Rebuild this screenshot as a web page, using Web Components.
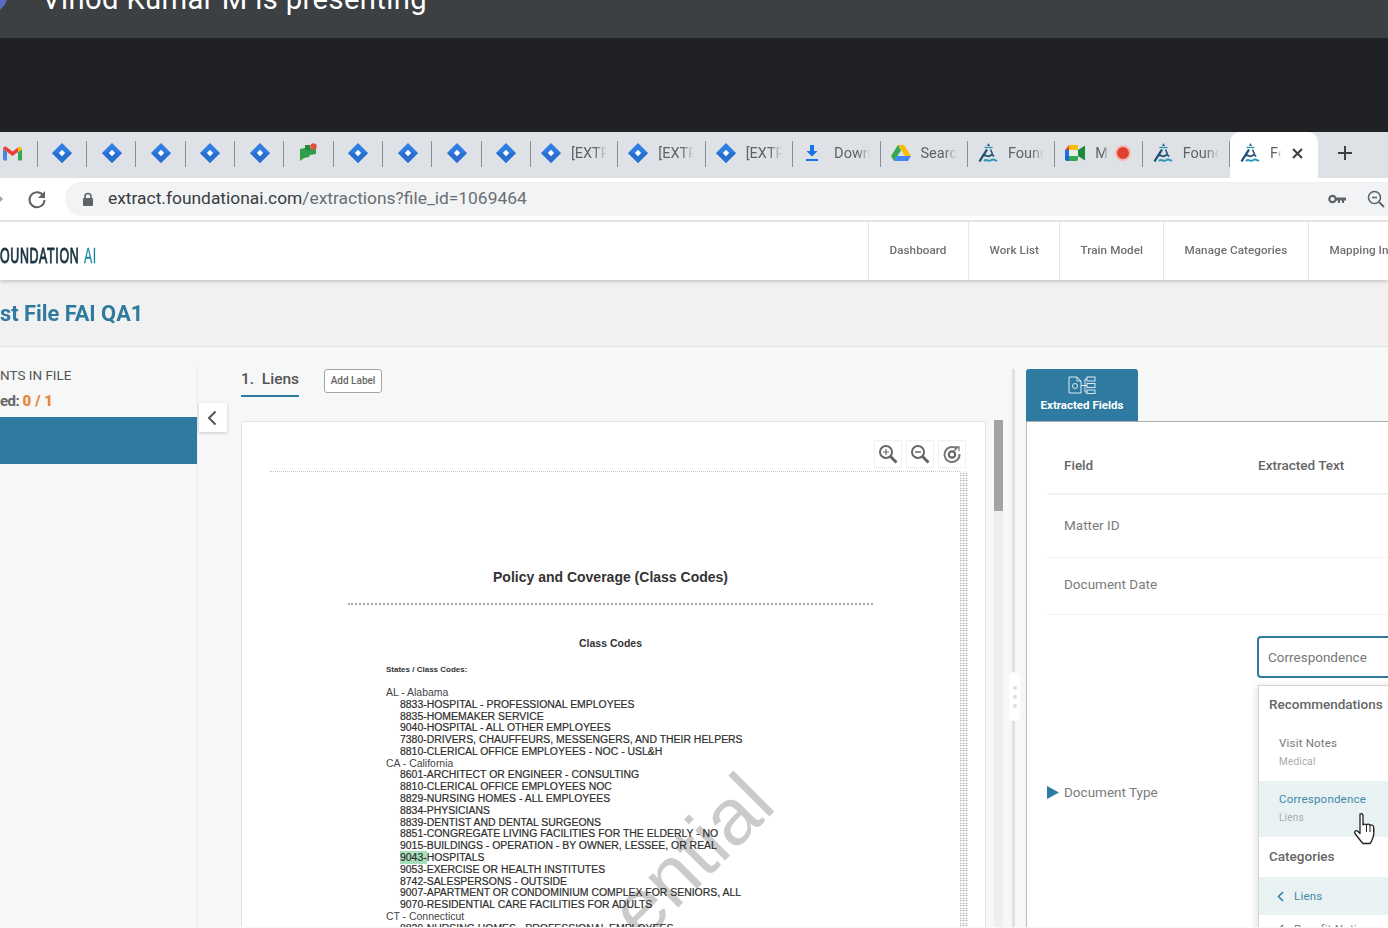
<!DOCTYPE html>
<html lang="en">
<head>
<meta charset="utf-8">
<title>Foundation AI extraction</title>
<style>
  html, body { margin: 0; height: 928px; overflow: hidden; background: #f6f7f7; }
  body { font-family: Roboto, "Liberation Sans", sans-serif; }
</style>
</head>
<body>
<share-view>
  <meet-bar>Vinod Kumar M is presenting</meet-bar>
  <tab-strip>
    <tab-item kind="gmail" narrow first></tab-item>
    <tab-item kind="jira" narrow></tab-item>
    <tab-item kind="jira" narrow></tab-item>
    <tab-item kind="jira" narrow></tab-item>
    <tab-item kind="jira" narrow></tab-item>
    <tab-item kind="jira" narrow></tab-item>
    <tab-item kind="chat" narrow></tab-item>
    <tab-item kind="jira" narrow></tab-item>
    <tab-item kind="jira" narrow></tab-item>
    <tab-item kind="jira" narrow></tab-item>
    <tab-item kind="jira" narrow></tab-item>
    <tab-item kind="jira">[EXTR</tab-item>
    <tab-item kind="jira">[EXTR</tab-item>
    <tab-item kind="jira">[EXTR</tab-item>
    <tab-item kind="download">Down</tab-item>
    <tab-item kind="drive">Searc</tab-item>
    <tab-item kind="found">Found</tab-item>
    <tab-item kind="meet" rec>M</tab-item>
    <tab-item kind="found">Found</tab-item>
    <tab-item kind="found" active>Fo</tab-item>
  </tab-strip>
  <addr-bar></addr-bar>
  <app-header>
    <nav-link w="100">Dashboard</nav-link>
    <nav-link w="91">Work List</nav-link>
    <nav-link w="104">Train Model</nav-link>
    <nav-link w="145">Manage Categories</nav-link>
    <nav-link w="80">Mapping In</nav-link>
  </app-header>
  <title-band>st File FAI QA1</title-band>
  <main-area>
    <docs-side></docs-side>
    <doc-viewer></doc-viewer>
    <extract-panel></extract-panel>
  </main-area>
</share-view>

<script>
const ICONS = {
  jira: `<svg width="20" height="20" viewBox="0 0 20 20"><path d="M10 0l10 10-10 10L0 10z" fill="#2f7de1"/><path d="M20 10L10 20 0 10l5-.5h10z" fill="#2a6fd0"/><path d="M10 6.800l3.200 3.200-3.200 3.200L6.800 10z" fill="#fff"/></svg>`,
  gmail: `<svg width="19" height="15" viewBox="0 0 19 15"><path d="M0 13.500V3l4 3v8.500H1z" fill="#4a86e8"/><path d="M15 14.500V6l4-3v10.500a1 1 0 0 1-1 1z" fill="#34a853"/><path d="M0 3c0-2 2-3 3.500-2L9.500 5.500 15 1.500 15 6 9.500 10 0 3z" fill="#ea4335"/><path d="M15 1.500C17 0 19 1 19 3l-4 3z" fill="#fbbc04"/></svg>`,
  chat: `<svg width="22" height="22" viewBox="0 0 22 22"><path d="M2 7l5-1V3h5v3l6 1v5l-6 1-1 2-5 1-4 3z" fill="#2f9e48"/><path d="M7 3h5v5H7z" fill="#1f8a3c"/><circle cx="15.500" cy="4.500" r="3.200" fill="#e2503e"/></svg>`,
  download: `<svg width="18" height="20" viewBox="0 0 18 20" style="margin-right:3px"><path d="M7 2h4v6h3.500L9 13.500 3.500 8H7z" fill="#1a73e8"/><path d="M3 16h12v2H3z" fill="#1a73e8"/></svg>`,
  drive: `<svg width="20" height="18" viewBox="0 0 20 18"><path d="M7 1h6l7 11h-6z" fill="#fbbc04"/><path d="M7 1l3 5.500L3 17 0 12z" fill="#34a853"/><path d="M6 12h14l-3 5H3z" fill="#4285f4"/></svg>`,
  found: `<svg width="20" height="20" viewBox="0 0 20 20"><path d="M10.500 0l1.600 3H8.900z" fill="#1b6f96"/><path d="M6.500 4.500h8" stroke="#2d8fb0" stroke-width="1.300"/><path d="M9 6.500C7 10 5 12 1.500 18.500" fill="none" stroke="#1d4f74" stroke-width="2.200"/><path d="M12.500 6.500l2 4.500" fill="none" stroke="#1d4f74" stroke-width="1.500"/><path d="M5 13c2.500-2.500 4 1.500 6.500 0s3-1.500 4.500.5" fill="none" stroke="#1d4f74" stroke-width="1.800"/><path d="M6 18c2.500-3 4 1 6.500-.5s3-1.500 6.500.5" fill="none" stroke="#2a9ab8" stroke-width="2"/></svg>`,
  meet: `<svg width="20" height="16" viewBox="0 0 20 16"><path d="M4 0h9v5H4z" fill="#fbbc04"/><path d="M4 0v5H0z" fill="#ea4335"/><path d="M0 5h4v6H0z" fill="#1a73e8"/><path d="M0 11h4v5H2a2 2 0 0 1-2-2z" fill="#1967d2"/><path d="M4 11h9v3a2 2 0 0 1-2 2H4z" fill="#34a853"/><path d="M13 5v6l7 4.500V.500z" fill="#1b8a3c"/><path d="M4 5h9v6H4z" fill="#e9efe6"/></svg>`
};

class ShareView extends HTMLElement {
  constructor() {
    super();
    this.attachShadow({ mode: 'open' }).innerHTML = `
      <style>:host{display:block;height:928px;overflow:hidden;filter:blur(.45px);}</style>
      <slot></slot>`;
  }
}

class MeetBar extends HTMLElement {
  constructor() {
    super();
    this.attachShadow({ mode: 'open' }).innerHTML = `
      <style>
        :host{display:block;height:38px;background:#3c4043;overflow:hidden;}
        .wrap{display:flex;align-items:flex-start;}
        .avatar{width:44px;height:44px;border-radius:50%;background:#5c6bc0;margin:-29px 34px 0 -36px;flex:none;}
        .name{font:400 29.200px/30px Roboto,sans-serif;color:#fff;margin-top:-16px;white-space:nowrap;letter-spacing:.4px;}
      </style>
      <div class="wrap"><div class="avatar"></div><div class="name"><slot></slot></div></div>`;
  }
}

class TabStrip extends HTMLElement {
  constructor() {
    super();
    this.attachShadow({ mode: 'open' }).innerHTML = `
      <style>
        :host{display:block;padding-top:94px;background:#202124;}
        .strip{display:flex;height:46px;background:#dee1e6;align-items:stretch;overflow:hidden;}
        .plus{width:54px;display:flex;align-items:center;justify-content:center;padding-bottom:4px;box-sizing:border-box;}
      </style>
      <div class="strip"><slot></slot>
        <div class="plus"><svg width="16" height="16" viewBox="0 0 16 16"><path d="M8 1v14M1 8h14" stroke="#3c4043" stroke-width="2"/></svg></div>
      </div>`;
  }
}

class TabItem extends HTMLElement {
  constructor() {
    super();
    this.attachShadow({ mode: 'open' });
  }
  connectedCallback() {
    const active = this.hasAttribute('active');
    const narrow = this.hasAttribute('narrow');
    const first = this.hasAttribute('first');
    const rec = this.hasAttribute('rec');
    const w = first ? 37.5 : narrow ? 49.35 : active ? 88 : 87.4;
    this.shadowRoot.innerHTML = `
      <style>
        :host{display:flex;flex:none;width:${w}px;box-sizing:border-box;align-items:center;position:relative;padding-bottom:4px;
          ${active ? 'background:#fff;border-radius:10px 10px 0 0;' : ''}
          padding-left:${narrow ? 0 : 10}px;${narrow ? 'justify-content:center;' : ''}
          ${first ? 'justify-content:flex-start;padding-left:3px;' : ''}}
        .sep{position:absolute;right:0;top:9px;height:26px;width:1px;background:#8a8d91;display:${active ? 'none' : 'block'};}
        .ico{display:flex;flex:none;}
        .txt{font:400 14.500px/20px Roboto,"Liberation Sans",sans-serif;color:#5f6368;margin:2px 0 0 10px;overflow:hidden;white-space:nowrap;
          width:${active ? 11 : rec ? 13 : 36}px;
          -webkit-mask-image:linear-gradient(90deg,#000 65%,transparent);mask-image:linear-gradient(90deg,#000 65%,transparent);}
        .rec{width:16px;height:16px;border-radius:50%;background:#e0402f;border:2px solid #f6b8b0;box-sizing:border-box;margin-left:7px;flex:none;}
        .x{margin-left:11px;display:flex;}
      </style>
      <span class="ico">${ICONS[this.getAttribute('kind')]}</span>
      ${narrow ? '' : '<span class="txt"><slot></slot></span>'}
      ${rec ? '<span class="rec"></span>' : ''}
      ${active ? '<span class="x"><svg width="11" height="11" viewBox="0 0 11 11"><path d="M1 1l9 9M10 1l-9 9" stroke="#3c4043" stroke-width="2"/></svg></span>' : ''}
      <span class="sep"></span>`;
  }
}

class AddrBar extends HTMLElement {
  constructor() {
    super();
    this.attachShadow({ mode: 'open' }).innerHTML = `
      <style>
        :host{display:flex;height:42px;background:#fff;border-bottom:2px solid #e3e4e6;align-items:center;overflow:hidden;}
        .back{width:27px;margin-left:-3px;display:flex;}
        .reload{width:41px;display:flex;padding-left:2px;box-sizing:border-box;}
        .pill{flex:1;height:34px;margin-right:-20px;background:#f1f3f4;border-radius:17px;display:flex;align-items:center;padding-left:17px;}
        .url{font:400 17.400px/22px Roboto,"Liberation Sans",sans-serif;color:#3a3c3f;margin:-2px 0 0 14px;flex:1;white-space:nowrap;}
        .url span{color:#6a6e72;}
        .end{display:flex;align-items:center;gap:21px;margin-right:23px;}
      </style>
      <div class="back"><svg width="10" height="14" viewBox="0 0 10 14"><path d="M0 1l6 6-6 6z" fill="#a0a3a7"/></svg></div>
      <div class="reload"><svg width="22" height="22" viewBox="0 0 22 22"><path d="M17.500 8A7.500 7.500 0 1 0 18.500 12" fill="none" stroke="#5f6368" stroke-width="2"/><path d="M19 3v7h-7z" fill="#5f6368"/></svg></div>
      <div class="pill">
        <svg width="12" height="15" viewBox="0 0 12 15"><path d="M3 7V4.500a3 3 0 0 1 6 0V7" fill="none" stroke="#5f6368" stroke-width="1.600"/><rect x="1" y="6" width="10" height="8" rx="1" fill="#5f6368"/></svg>
        <div class="url">extract.foundationai.com<span>/extractions?file_id=1069464</span></div>
        <div class="end">
          <svg width="18" height="10" viewBox="0 0 18 10"><circle cx="4.500" cy="5" r="3.200" fill="none" stroke="#5f6368" stroke-width="2.200"/><path d="M8 3.500h10v3h-2v2.500h-2V6.500h-2V9h-2V6.500H8z" fill="#5f6368"/></svg>
          <svg width="18" height="18" viewBox="0 0 18 18"><circle cx="7.500" cy="7.500" r="6" fill="none" stroke="#5f6368" stroke-width="1.600"/><path d="M5 7.500h5" stroke="#5f6368" stroke-width="1.600"/><path d="M12 12l5 5" stroke="#5f6368" stroke-width="1.800"/></svg>
        </div>
      </div>`;
  }
}

class AppHeader extends HTMLElement {
  constructor() {
    super();
    this.attachShadow({ mode: 'open' }).innerHTML = `
      <style>
        :host{display:flex;height:58px;background:#fff;box-shadow:0 2px 3px rgba(0,0,0,.16);position:relative;overflow:hidden;}
        .logo{width:868px;display:flex;align-items:center;flex:none;overflow:hidden;padding-top:9px;box-sizing:border-box;}
        .mark{font:400 22.500px/24px "Liberation Sans",sans-serif;color:#16303f;letter-spacing:1.200px;white-space:nowrap;
          transform:scaleX(.55);transform-origin:0 50%;-webkit-text-stroke:1px #16303f;}
        .mark span{color:#1f88a5;-webkit-text-stroke:.3px #1f88a5;margin-left:1px;}
      </style>
      <div class="logo"><div class="mark">OUNDATION <span>AI</span></div></div>
      <slot></slot>`;
  }
}

class NavLink extends HTMLElement {
  constructor() { super(); this.attachShadow({ mode: 'open' }); }
  connectedCallback() {
    this.shadowRoot.innerHTML = `
      <style>
        :host{display:flex;flex:none;width:${this.getAttribute('w')}px;box-sizing:border-box;border-left:1px solid #e6e6e6;align-items:center;padding-left:20.500px;
          font:500 11.700px/16px Roboto,sans-serif;color:#6f7072;white-space:nowrap;padding-bottom:2px;overflow:hidden;letter-spacing:.05px;}
      </style><slot></slot>`;
  }
}

class TitleBand extends HTMLElement {
  constructor() {
    super();
    this.attachShadow({ mode: 'open' }).innerHTML = `
      <style>
        :host{display:flex;height:67px;background:#f1f1f1;border-bottom:1px solid #e3e3e3;align-items:center;box-sizing:border-box;padding-top:1px;
          font:700 21.800px/28px Roboto,sans-serif;color:#2f7a9f;white-space:nowrap;overflow:hidden;}
      </style><slot></slot>`;
  }
}

class MainArea extends HTMLElement {
  constructor() {
    super();
    this.attachShadow({ mode: 'open' }).innerHTML = `
      <style>:host{display:flex;height:580px;background:#f6f7f7;overflow:hidden;position:relative;}</style><slot></slot>`;
  }
}

class DocsSide extends HTMLElement {
  constructor() {
    super();
    this.attachShadow({ mode: 'open' }).innerHTML = `
      <style>
        :host{display:block;flex:none;width:198px;box-sizing:border-box;border-right:1px solid #ececec;margin-top:20px;white-space:nowrap;overflow:hidden;}
        .head{font:400 13.500px/16px Roboto,sans-serif;color:#555;height:16px;}
        .count{font:700 15px/20px Roboto,sans-serif;color:#666;margin-top:8px;height:20px;}
        .lead{letter-spacing:-.5px;}
        .count b{color:#e68a3a;letter-spacing:.1px;}
        .bar{height:47px;background:#2e7aa0;margin-top:6px;}
      </style>
      <div class="head">NTS IN FILE</div>
      <div class="count"><span class="lead">ed: </span><b>0 / 1</b></div>
      <div class="bar"></div>`;
  }
}

class DocViewer extends HTMLElement {
  constructor() {
    super();
    this.attachShadow({ mode: 'open' }).innerHTML = `
      <style>
        :host{display:flex;flex:none;width:828px;box-sizing:border-box;padding-left:43px;position:relative;}
        .col{width:745px;flex:none;}
        .tabs{display:flex;height:49px;padding-top:21px;align-items:flex-start;}
        .lien{font:500 15.500px/20px Roboto,sans-serif;color:#555;height:26px;padding-top:1px;border-bottom:2px solid #2e7aa0;white-space:pre;}
        .add{margin:1px 0 0 25px;width:58px;height:24px;box-sizing:border-box;border:1px solid #a6a6a6;border-radius:3px;background:#fff;
          font:500 10px/22px Roboto,sans-serif;color:#666;text-align:center;white-space:nowrap;}
        .card{position:relative;height:600px;background:#fff;border:1px solid #e4e4e4;border-radius:3px;box-sizing:border-box;overflow:hidden;margin-top:4px;}
        .scroll{width:9px;flex:none;height:520px;margin:73px 0 0 8px;background:#eceef0;}
        .thumb{height:91px;background:#a3a3a3;}
        .split{width:3px;height:560px;margin:22px 0 0 9px;background:#e1e1e1;flex:none;}
        .handle{position:absolute;left:811px;top:325px;width:11px;height:49px;background:#fff;border-radius:6px;display:flex;flex-direction:column;align-items:center;justify-content:center;gap:5px;}
        .handle i{width:4px;height:4px;border-radius:50%;background:#ddd;}
        .collapse{position:absolute;left:1px;top:56px;width:28px;height:29px;background:#fff;box-shadow:0 1px 3px rgba(0,0,0,.2);display:flex;align-items:center;justify-content:center;padding-right:3px;box-sizing:border-box;}
        .tools{position:absolute;right:19px;top:18px;display:flex;gap:4px;z-index:3;}
        .tool{width:28px;height:28px;background:#fff;display:flex;align-items:center;justify-content:center;border:1px solid #f1f1f1;box-sizing:border-box;}
        .page{position:absolute;left:28px;top:49px;width:690px;height:560px;border-top:1px dotted #c4c4c4;box-sizing:border-box;color:#222;font-family:"Liberation Sans",sans-serif;}
        .strip{position:absolute;left:718px;top:49px;width:8px;height:560px;opacity:.7;
          background:repeating-linear-gradient(0deg,#c2c2c2 0 1px,#fff 1px 2px,#d0d0d0 2px 3px,#fff 3px 5px),repeating-linear-gradient(90deg,#ddd 0 1px,#fff 1px 3px);
          background-blend-mode:multiply;}
        .wm{position:absolute;right:208px;top:319px;font:400 80px/80px "Liberation Sans",sans-serif;color:#cbcbcb;white-space:nowrap;transform:rotate(-45deg);transform-origin:100% 66px;}
        h1{font-size:14px;line-height:20px;font-weight:700;text-align:center;margin:95px 0 0 78px;width:525px;color:#333;}
        .rule{margin:16px 0 0 78px;width:525px;border-top:2px dotted #aaa;}
        h2{font-size:10.500px;line-height:14px;font-weight:700;text-align:center;margin:31px 0 0 78px;width:525px;color:#333;}
        h3{font-size:8px;line-height:10px;font-weight:700;margin:15px 0 0 116px;color:#333;}
        .list{position:relative;margin:12px 0 0 116px;font-size:10.450px;line-height:11.780px;white-space:nowrap;color:#2a2a2a;}
        .list p{margin:0;padding-left:14px;-webkit-text-stroke:.2px #333;}
        .list .st{padding-left:0;-webkit-text-stroke:0;color:#444;}
        mark{background:#a6e0bb;color:inherit;padding:1px 0;}
      </style>
      <div class="col">
        <div class="tabs"><div class="lien">1.  Liens</div><div class="add">Add Label</div></div>
        <div class="card">
          <div class="wm">ential</div>
          <div class="page">
            <h1>Policy and Coverage (Class Codes)</h1>
            <div class="rule"></div>
            <h2>Class Codes</h2>
            <h3>States / Class Codes:</h3>
            <div class="list">
              <p class="st">AL - Alabama</p>
              <p>8833-HOSPITAL - PROFESSIONAL EMPLOYEES</p>
              <p>8835-HOMEMAKER SERVICE</p>
              <p>9040-HOSPITAL - ALL OTHER EMPLOYEES</p>
              <p>7380-DRIVERS, CHAUFFEURS, MESSENGERS, AND THEIR HELPERS</p>
              <p>8810-CLERICAL OFFICE EMPLOYEES - NOC - USL&amp;H</p>
              <p class="st">CA - California</p>
              <p>8601-ARCHITECT OR ENGINEER - CONSULTING</p>
              <p>8810-CLERICAL OFFICE EMPLOYEES NOC</p>
              <p>8829-NURSING HOMES - ALL EMPLOYEES</p>
              <p>8834-PHYSICIANS</p>
              <p>8839-DENTIST AND DENTAL SURGEONS</p>
              <p>8851-CONGREGATE LIVING FACILITIES FOR THE ELDERLY - NO</p>
              <p>9015-BUILDINGS - OPERATION - BY OWNER, LESSEE, OR REAL</p>
              <p><mark>9043-</mark>HOSPITALS</p>
              <p>9053-EXERCISE OR HEALTH INSTITUTES</p>
              <p>8742-SALESPERSONS - OUTSIDE</p>
              <p>9007-APARTMENT OR CONDOMINIUM COMPLEX FOR SENIORS, ALL</p>
              <p>9070-RESIDENTIAL CARE FACILITIES FOR ADULTS</p>
              <p class="st">CT - Connecticut</p>
              <p>8829-NURSING HOMES - PROFESSIONAL EMPLOYEES</p>
            </div>
          </div>
          <div class="strip"></div>
          <div class="tools">
            <div class="tool"><svg width="20" height="20" viewBox="0 0 20 20"><circle cx="8" cy="8" r="6" fill="none" stroke="#666" stroke-width="2"/><path d="M5 8h6M8 5v6" stroke="#666" stroke-width="1.200"/><path d="M12.500 12.500l6 6" stroke="#666" stroke-width="3"/></svg></div>
            <div class="tool"><svg width="20" height="20" viewBox="0 0 20 20"><circle cx="8" cy="8" r="6" fill="none" stroke="#666" stroke-width="2"/><path d="M5 8h6" stroke="#666" stroke-width="1.400"/><path d="M12.500 12.500l6 6" stroke="#666" stroke-width="3"/></svg></div>
            <div class="tool"><svg width="20" height="20" viewBox="0 0 20 20"><path d="M14.500 4.500A7.500 7.500 0 1 0 17.500 10" fill="none" stroke="#777" stroke-width="2"/><circle cx="10" cy="10.500" r="3.200" fill="none" stroke="#666" stroke-width="2.200"/><path d="M12 7l4-4M13 3h4v4" fill="none" stroke="#777" stroke-width="1.300"/></svg></div>
          </div>
        </div>
      </div>
      <div class="scroll"><div class="thumb"></div></div>
      <div class="split"></div>
      <div class="handle"><i></i><i></i><i></i></div>
      <div class="collapse"><svg width="10" height="16" viewBox="0 0 10 16"><path d="M8.500 1.500L2 8l6.500 6.500" fill="none" stroke="#555" stroke-width="2"/></svg></div>`;
  }
}

class ExtractPanel extends HTMLElement {
  constructor() {
    super();
    this.attachShadow({ mode: 'open' }).innerHTML = `
      <style>
        :host{display:block;flex:1;min-width:0;margin-top:22px;position:relative;font-family:Roboto,sans-serif;}
        .tab{width:112px;height:52px;background:#2e7aa0;border-radius:3px 3px 0 0;color:#fff;font:700 11.500px/14px Roboto,sans-serif;text-align:center;display:flex;flex-direction:column;align-items:center;padding-top:7px;box-sizing:border-box;gap:4px;white-space:nowrap;}
        .body{background:#fff;border-top:1px solid #a9adb0;border-left:1px solid #b9bcbe;height:520px;padding-left:20px;box-sizing:border-box;}
        .row{display:flex;align-items:center;box-sizing:border-box;border-bottom:2px solid #f0f3f4;padding-left:17px;font:400 13.500px/20px Roboto,sans-serif;color:#7b7b7b;}
        .row span{width:194px;flex:none;}
        .hd{height:73px;color:#666;font-weight:500;padding-top:14px;}
        .r1{height:63px;border-bottom-width:1px;padding-bottom:2px;}
        .r2{height:57px;border-bottom-width:1px;padding-bottom:4px;}
        .type{display:flex;padding-top:167px;font:400 13.500px/20px Roboto,sans-serif;color:#7b7b7b;align-items:center;gap:5px;}
        .input{position:absolute;left:231px;top:267px;width:200px;height:42px;border:2px solid #2e7aa0;border-radius:4px;background:#fff;box-sizing:border-box;font:400 13.500px/38px Roboto,sans-serif;color:#777;padding-left:9px;}
        .menu{position:absolute;left:232px;top:316px;width:200px;height:300px;background:#fff;border:1px solid #d6d6d6;box-shadow:0 2px 8px rgba(0,0,0,.18);box-sizing:border-box;font-family:Roboto,sans-serif;}
        .lab{font:500 13.500px/18px Roboto,sans-serif;color:#666;padding-left:10px;white-space:nowrap;}
        .it{padding-left:20px;height:56px;box-sizing:border-box;font:400 11.500px/14px Roboto,sans-serif;color:#777;padding-top:11px;letter-spacing:.2px;}
        .it small{display:block;font:400 10px/14px Roboto,sans-serif;color:#aaa;margin-top:5px;}
        .it.on{background:#e9f2f3;color:#3f88a8;}
        .cat{display:flex;align-items:center;gap:10px;height:38px;padding-left:18px;font:400 11.500px/14px Roboto,sans-serif;color:#777;letter-spacing:.2px;}
        .cat.on{background:#e9f2f3;color:#3f88a8;}
        .cursor{position:absolute;left:328px;top:443px;z-index:4;}
      </style>
      <div class="tab">
        <svg width="28" height="18" viewBox="0 0 28 18" fill="none" stroke="#dceaf1" stroke-width="1"><path d="M1 1h8l4 4v12H1zM9 1v4h4"/><circle cx="7" cy="10" r="2.500"/><path d="M13 9.500h4M17 3v13M17 3h2M17 16h2M17 9.500h2"/><rect x="19" y="1" width="8" height="4"/><rect x="19" y="7.500" width="8" height="4"/><rect x="19" y="14" width="8" height="3.500"/></svg>
        <div>Extracted Fields</div>
      </div>
      <div class="body">
        <div class="row hd"><span>Field</span><span>Extracted Text</span></div>
        <div class="row r1"><span>Matter ID</span></div>
        <div class="row r2"><span>Document Date</span></div>
        <div class="type"><svg width="12" height="13" viewBox="0 0 12 13"><path d="M0 0l12 6.500L0 13z" fill="#2e7aa0"/></svg>Document Type</div>
      </div>
      <div class="input">Correspondence</div>
      <div class="menu">
        <div class="lab" style="margin-top:9px">Recommendations</div>
        <div class="it" style="margin-top:11px;height:57px;padding-top:12px">Visit Notes<small>Medical</small></div>
        <div class="it on">Correspondence<small>Liens</small></div>
        <div class="lab" style="margin-top:10px">Categories</div>
        <div class="cat on" style="margin-top:12px"><svg width="7" height="11" viewBox="0 0 7 11"><path d="M6 1L1.500 5.500 6 10" fill="none" stroke="#2e7aa0" stroke-width="1.500"/></svg>Liens</div>
        <div class="cat" style="margin-top:-5px"><svg width="7" height="11" viewBox="0 0 7 11"><path d="M6 1L1.500 5.500 6 10" fill="none" stroke="#777" stroke-width="1.500"/></svg>Benefit Notice</div>
      </div>
      <svg class="cursor" width="24" height="34" viewBox="0 0 24 34"><path d="M6 2c1.500-1 3 0 3 2v9c1-1.500 3-1 3.500 0 1-1.500 3-1 3.500.5 1-1 3-.5 3.500 1 .5 3 .5 8-.5 11-1 3-2 5-3 6H9c-2-2-5-6-8-10-1-2 1-4 3-2l2 2V4z" fill="#fff" stroke="#222" stroke-width="1.300" stroke-linejoin="round"/><path d="M12.500 13v7M16 14v6M19.500 15v5" stroke="#222" stroke-width="1"/></svg>`;
  }
}

customElements.define('share-view', ShareView);
customElements.define('meet-bar', MeetBar);
customElements.define('tab-strip', TabStrip);
customElements.define('tab-item', TabItem);
customElements.define('addr-bar', AddrBar);
customElements.define('app-header', AppHeader);
customElements.define('nav-link', NavLink);
customElements.define('title-band', TitleBand);
customElements.define('main-area', MainArea);
customElements.define('docs-side', DocsSide);
customElements.define('doc-viewer', DocViewer);
customElements.define('extract-panel', ExtractPanel);
</script>
</body>
</html>
